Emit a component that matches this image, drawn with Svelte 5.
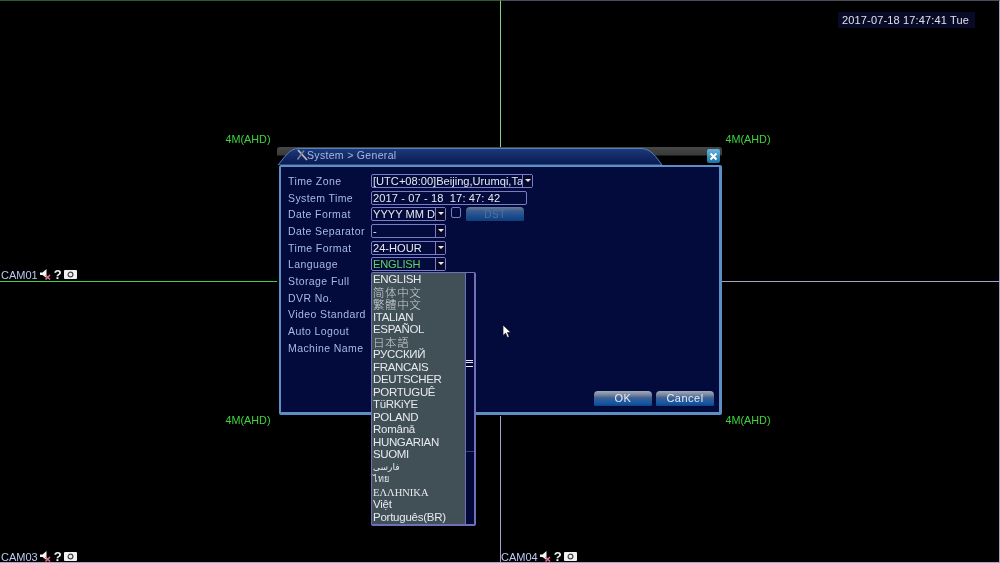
<script>
  const cams = [
    { id: 'cam1', label: 'CAM01' },
    { id: 'cam2', label: '' },
    { id: 'cam3', label: 'CAM03' },
    { id: 'cam4', label: 'CAM04' }
  ];

  const rows = [
    { label: 'Time Zone', kind: 'select', value: '[UTC+08:00]Beijing,Urumqi,Taipei', size: 'wide' },
    { label: 'System Time', kind: 'input', value: '2017 - 07 - 18  17: 47: 42' },
    { label: 'Date Format', kind: 'date', value: 'YYYY MM DD' },
    { label: 'Date Separator', kind: 'select', value: '-' },
    { label: 'Time Format', kind: 'select', value: '24-HOUR' },
    { label: 'Language', kind: 'select', value: 'ENGLISH', active: true },
    { label: 'Storage Full' },
    { label: 'DVR No.' },
    { label: 'Video Standard' },
    { label: 'Auto Logout' },
    { label: 'Machine Name' }
  ];

  const languages = [
    { text: 'ENGLISH' },
    { text: '简体中文', cls: 'cjk' },
    { text: '繁體中文', cls: 'cjk' },
    { text: 'ITALIAN' },
    { text: 'ESPAÑOL' },
    { text: '日本語', cls: 'cjk' },
    { text: 'РУССКИЙ' },
    { text: 'FRANCAIS' },
    { text: 'DEUTSCHER' },
    { text: 'PORTUGUÊ' },
    { text: 'TüRKiYE' },
    { text: 'POLAND' },
    { text: 'Românǎ', cls: 'lower' },
    { text: 'HUNGARIAN' },
    { text: 'SUOMI' },
    { text: 'فارسی', cls: 'small' },
    { text: 'ไทย', cls: 'small' },
    { text: 'ΕΛΛΗΝΙΚΑ', cls: 'greek' },
    { text: 'Việt', cls: 'lower' },
    { text: 'Português(BR)', cls: 'lower' }
  ];
</script>

<div class="screen">
  <div class="grid">
    {#each cams as cam}
      <div class="cell {cam.id}">
        <span class="res">4M(AHD)</span>
        {#if cam.label}
          <div class="cam">
            <span>{cam.label}</span>
            <svg width="11" height="11" viewBox="0 0 11 11">
              <path d="M0 3.500h2.500L6.500 0v9L2.500 6H0z" fill="#f4f4f4" />
              <path d="M5.500 6l4.500 4.500M10 6l-4.500 4.500" stroke="#e07088" stroke-width="1.500" />
            </svg>
            <b class="help">?</b>
            <svg width="13" height="9" viewBox="0 0 13 9">
              <rect width="13" height="9" rx="1" fill="#f2f2f2" />
              <circle cx="6.500" cy="4.500" r="2.400" fill="none" stroke="#444" stroke-width="1.200" />
            </svg>
          </div>
        {/if}
      </div>
    {/each}
  </div>

  <div class="clock">2017-07-18 17:47:41 Tue</div>

  <div class="dialog">
    <div class="head">
      <svg class="tab" width="445" height="18" viewBox="0 0 445 18">
        <defs>
          <linearGradient id="tabfill" x1="0" y1="0" x2="0" y2="1">
            <stop offset="0" stop-color="#1c3a7c" />
            <stop offset="1" stop-color="#0a1850" />
          </linearGradient>
        </defs>
        <path d="M1 18C8 10 12 1.500 22 1.500H364C374 1.500 379 10 385 18Z" fill="url(#tabfill)" stroke="#4f85b8" />
      </svg>
      <svg class="wrench" width="12" height="12" viewBox="0 0 12 12">
        <path d="M2 1l9 10" stroke="#b8b8c0" stroke-width="1.800" />
        <path d="M8 1.500L1.500 10.500" stroke="#7a8090" stroke-width="1.600" />
      </svg>
      <span class="title">System &gt; General</span>
      <button class="close" aria-label="Close">
        <svg width="9" height="9" viewBox="0 0 9 9">
          <path d="M1.500 1.500l6 6M7.500 1.500l-6 6" stroke="#fff" stroke-width="2" />
        </svg>
      </button>
    </div>

    <div class="body">
      <div class="form">
        {#each rows as row}
          <div class="row">
            <span class="label">{row.label}</span>
            {#if row.kind === 'input'}
              <div class="field input"><span class="val">{row.value}</span></div>
            {:else if row.kind === 'select' || row.kind === 'date'}
              <div class="field select {row.size || ''}" class:active={row.active}>
                <span class="val">{row.value}</span>
                <span class="arrow"></span>
              </div>
              {#if row.kind === 'date'}
                <span class="check"></span>
                <button class="btn dst">DST</button>
              {/if}
            {/if}
          </div>
        {/each}
      </div>
      <div class="foot">
        <button class="btn">OK</button>
        <button class="btn">Cancel</button>
      </div>
    </div>

    <div class="menu">
      <div class="items">
        {#each languages as lang}
          <div class="item {lang.cls || ''}">{lang.text}</div>
        {/each}
      </div>
      <div class="track">
        <span class="thumb"></span>
        <span class="notch"></span>
      </div>
    </div>
  </div>

  <svg class="pointer" width="10" height="15" viewBox="0 0 10 15">
    <path d="M1 1v10.500l2.600-2.300 1.800 4.300 1.800-.8-1.800-4.200h3.400z" fill="#fff" stroke="#111" stroke-width=".7" />
  </svg>
</div>

<style>
  :global(body) {
    margin: 0;
    background: #000;
  }

  .screen {
    position: relative;
    width: 1000px;
    height: 563px;
    overflow: hidden;
    background: #000;
    font-family: "Liberation Sans", Arial, sans-serif;
    filter: blur(0.4px);
  }

  .grid {
    display: grid;
    grid-template-columns: 501px 499px;
    grid-template-rows: 281px 282px;
    height: 563px;
  }

  .cell {
    position: relative;
    display: grid;
    place-items: center;
    box-sizing: border-box;
    padding: 0 4px 4px 0;
    border-right: 1px solid #a8a2c8;
    border-bottom: 1px solid #a8a2c8;
  }

  .cell.cam1 {
    border-top: 1px solid #2e5a2e;
    border-right: 1px solid #86d08e;
    border-bottom: 0;
  }

  .cell.cam2 {
    border-top: 1px solid #4d4a5c;
    border-bottom: 0;
  }

  .cell.cam3 {
    border-top: 1px solid #3fd04a;
  }

  .cell.cam4 {
    border-top: 1px solid #a8a2c8;
  }

  .res {
    color: #3ed43e;
    font-size: 10.8px;
  }

  .cam {
    position: absolute;
    left: 1px;
    bottom: 0;
    display: flex;
    align-items: center;
    gap: 2.500px;
    height: 13px;
    color: #b9c9f2;
    font-size: 11px;
  }

  .cam3 .cam {
    bottom: -1px;
  }

  .cam4 .cam {
    bottom: -1px;
    left: 0;
  }

  .help {
    width: 8px;
    color: #f2f2f2;
    font-size: 13px;
    line-height: 13px;
  }

  .clock {
    position: absolute;
    top: 12px;
    left: 838px;
    padding: 0 6px 0 4px;
    height: 16px;
    line-height: 16px;
    background: #090a28;
    color: #dfe2ea;
    font-size: 11px;
    letter-spacing: 0.15px;
    white-space: nowrap;
  }

  .dialog {
    position: absolute;
    top: 147px;
    left: 277px;
    display: flex;
    flex-direction: column;
    width: 445px;
    height: 269px;
    border-radius: 3px 3px 2px 2px;
    background: #000;
  }

  .head {
    position: relative;
    display: flex;
    align-items: center;
    flex: none;
    box-sizing: border-box;
    height: 18px;
    padding: 0 0 2px 19px;
    background: linear-gradient(#474747 0, #3a3a3a 8px, #000 9px);
    border-radius: 3px 3px 0 0;
  }

  .tab {
    position: absolute;
    top: 0;
    left: 0;
  }

  .wrench {
    position: relative;
  }

  .title {
    position: relative;
    margin: 0 0 0 -1px;
    color: #a4b9e8;
    font-size: 10.5px;
    letter-spacing: 0.32px;
  }

  .close {
    position: absolute;
    top: 2px;
    right: 2px;
    display: grid;
    place-items: center;
    width: 13px;
    height: 14px;
    padding: 0;
    border: 0;
    border-radius: 2px;
    background: linear-gradient(#62b6de, #1f70a8);
  }

  .body {
    display: flex;
    flex: 1;
    flex-direction: column;
    justify-content: space-between;
    box-sizing: border-box;
    margin: 0 0 1px 2px;
    padding: 5.5px 5px 6px 7px;
    border: solid #5e8fc4;
    border-width: 2px 3px 3px 2px;
    border-radius: 2px;
    background: #030a3c;
  }

  .row {
    display: flex;
    align-items: center;
    height: 16.7px;
  }

  .label {
    flex: none;
    width: 83px;
    color: #a7bbe6;
    font-size: 10.5px;
    letter-spacing: 0.4px;
    white-space: nowrap;
  }

  .field {
    display: flex;
    align-items: stretch;
    box-sizing: border-box;
    width: 75px;
    height: 14px;
    border: 1px solid #7a7cc8;
    border-radius: 2px;
    color: #e6e8f0;
    font-size: 11.1px;
    line-height: 12px;
  }

  .wide {
    width: 162px;
  }

  .input {
    width: 156px;
  }

  .input .val {
    letter-spacing: 0.1px;
  }

  .val {
    flex: 1;
    min-width: 0;
    padding-left: 1px;
    overflow: hidden;
    white-space: pre;
  }

  .active .val {
    color: #63d660;
    letter-spacing: -0.2px;
  }

  .arrow {
    position: relative;
    flex: none;
    width: 9px;
    border-left: 1px solid #7a7cc8;
    background: #08082c;
  }

  .arrow::after {
    content: "";
    position: absolute;
    top: 4px;
    left: 2px;
    border: 3px solid transparent;
    border-top: 3px solid #e8e8e8;
    border-bottom: 0;
  }

  .check {
    flex: none;
    box-sizing: border-box;
    width: 10px;
    height: 11px;
    margin: -3px 5px 0 5px;
    border: 1px solid #7a7cc8;
    border-radius: 2px;
  }

  .btn {
    box-sizing: border-box;
    width: 58px;
    height: 15px;
    padding: 0;
    border: 0;
    border-radius: 4px 4px 1px 1px;
    background: linear-gradient(#a0acc0 0, #76849c 4px, #3c5f94 7px, #0d55a6 13px, #1a3f78 15px);
    color: #e6ecf6;
    font-family: inherit;
    font-size: 11px;
    letter-spacing: 0.5px;
    line-height: 15px;
  }

  .dst {
    margin-top: -1px;
    height: 14px;
    background: linear-gradient(#6a7c98 0, #3a5c8e 4px, #10488e 11px, #173a70 14px);
    color: #53709c;
    font-size: 10px;
  }

  .foot {
    display: flex;
    justify-content: flex-end;
    gap: 4px;
  }

  .menu {
    position: absolute;
    top: 125px;
    left: 94px;
    display: flex;
    box-sizing: border-box;
    width: 105px;
    height: 254px;
    border: solid #6e70b8;
    border-width: 1px 2px 2px 1px;
    border-radius: 2px;
    background: #040838;
  }

  .items {
    flex: none;
    box-sizing: border-box;
    width: 93px;
    background: #414f57;
    color: #e6eaee;
    font-size: 11.5px;
  }

  .item {
    height: 12.5px;
    padding-left: 1px;
    line-height: 13px;
    letter-spacing: -0.35px;
    white-space: nowrap;
  }

  .lower {
    letter-spacing: -0.25px;
  }

  .cjk {
    color: #cdd2d6;
    font-family: "Noto Sans CJK SC", sans-serif;
    font-weight: 300;
    letter-spacing: 0.6px;
  }

  .small {
    font-family: "DejaVu Sans", "Noto Sans", sans-serif;
    font-size: 9px;
    letter-spacing: 0;
  }

  .greek {
    font-family: "Liberation Serif", serif;
    font-size: 10.5px;
    letter-spacing: 0;
  }

  .track {
    position: relative;
    flex: 1;
    border-left: 1px solid #6e70b8;
  }

  .thumb {
    position: absolute;
    top: 87px;
    left: 0;
    width: 7px;
    height: 5px;
    border-top: 1px solid #e8e8f4;
    border-bottom: 1px solid #e8e8f4;
    background: linear-gradient(transparent 1px, #e8e8f4 1px, #e8e8f4 2px, transparent 2px);
  }

  .notch {
    position: absolute;
    top: 178px;
    left: 0;
    width: 100%;
    height: 1px;
    background: #3a3f80;
  }

  .pointer {
    position: absolute;
    top: 324px;
    left: 502px;
  }
</style>
